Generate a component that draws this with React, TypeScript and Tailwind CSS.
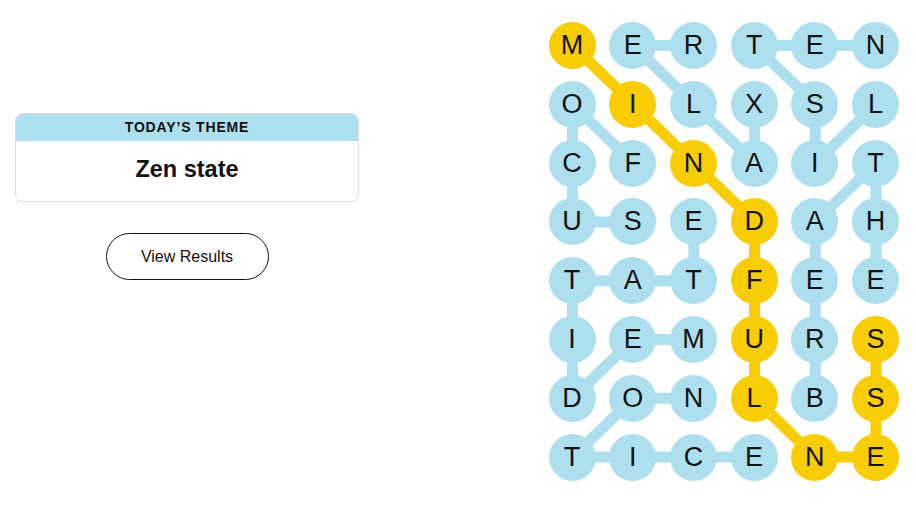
import React from "react";

const LETTERS = ["MERTEN", "OILXSL", "CFNAIT", "USEDAH", "TATFEE", "IEMURS", "DONLBS", "TICENE"];

type Cell = [number, number];
type Word = { cells: Cell[]; spangram?: boolean };

const WORDS: Word[] = [
  { cells: [[0, 0], [1, 1], [2, 2], [3, 3], [4, 3], [5, 3], [6, 3], [7, 4], [7, 5], [6, 5], [5, 5]], spangram: true },
  { cells: [[0, 2], [0, 1], [1, 2], [2, 3], [1, 3]] },
  { cells: [[1, 5], [2, 4], [1, 4], [0, 3], [0, 4], [0, 5]] },
  { cells: [[2, 1], [1, 0], [2, 0], [3, 0], [3, 1]] },
  { cells: [[6, 4], [5, 4], [4, 4], [3, 4], [2, 5], [3, 5], [4, 5]] },
  { cells: [[5, 2], [5, 1], [6, 0], [5, 0], [4, 0], [4, 1], [4, 2], [3, 2]] },
  { cells: [[6, 2], [6, 1], [7, 0], [7, 1], [7, 2], [7, 3]] },
];

const BLUE = "#aedfee";
const YELLOW = "#f8cd05";
const SIZE = 47;
const COL_PITCH = 60.7;
const ROW_PITCH = 58.8;

const cx = (c: number) => SIZE / 2 + c * COL_PITCH;
const cy = (r: number) => SIZE / 2 + r * ROW_PITCH;

function isSpangram(r: number, c: number) {
  return WORDS[0].cells.some(([rr, cc]) => rr === r && cc === c);
}

function Board() {
  return (
    <div className="relative">
      {/* connecting lines under the letters */}
      <svg className="absolute inset-0 h-full w-full" aria-hidden>
        {WORDS.map((w, i) => (
          <polyline
            key={i}
            points={w.cells.map(([r, c]) => `${cx(c)},${cy(r)}`).join(" ")}
            fill="none"
            stroke={w.spangram ? YELLOW : BLUE}
            strokeWidth={11}
            strokeLinejoin="round"
          />
        ))}
      </svg>
      <div className="relative grid grid-cols-[repeat(6,47px)] gap-x-[13.7px] gap-y-[11.8px]">
        {LETTERS.map((row, r) =>
          row.split("").map((ch, c) => (
            <button
              key={`${r}-${c}`}
              className={`flex h-[47px] w-[47px] items-center justify-center rounded-full text-[27px] leading-none text-[#121212] ${
                isSpangram(r, c) ? "bg-[#f8cd05]" : "bg-[#aedfee]"
              }`}
            >
              {ch}
            </button>
          ))
        )}
      </div>
    </div>
  );
}

export default function App() {
  return (
    <div className="flex h-[515px] w-[916px] bg-white font-['Liberation_Sans',Arial,sans-serif] text-[#121212]">
      <div className="ml-[15px] mt-[113px] flex w-[344px] flex-col items-center">
        <div className="w-full overflow-hidden rounded-lg border border-[#dcdcdc]">
          <div className="flex h-[27px] items-center justify-center bg-[#aedfee] text-[14px] font-semibold tracking-[0.06em]">
            TODAY’S THEME
          </div>
          <div className="flex h-[60px] items-center justify-center pb-[3px] text-[23.5px] font-bold">
            Zen state
          </div>
        </div>
        <button className="mt-[31px] h-[47px] w-[163px] rounded-full border border-[#121212] text-[16px]">
          View Results
        </button>
      </div>
      <div className="ml-auto mr-[17px] mt-[22px]">
        <Board />
      </div>
    </div>
  );
}
